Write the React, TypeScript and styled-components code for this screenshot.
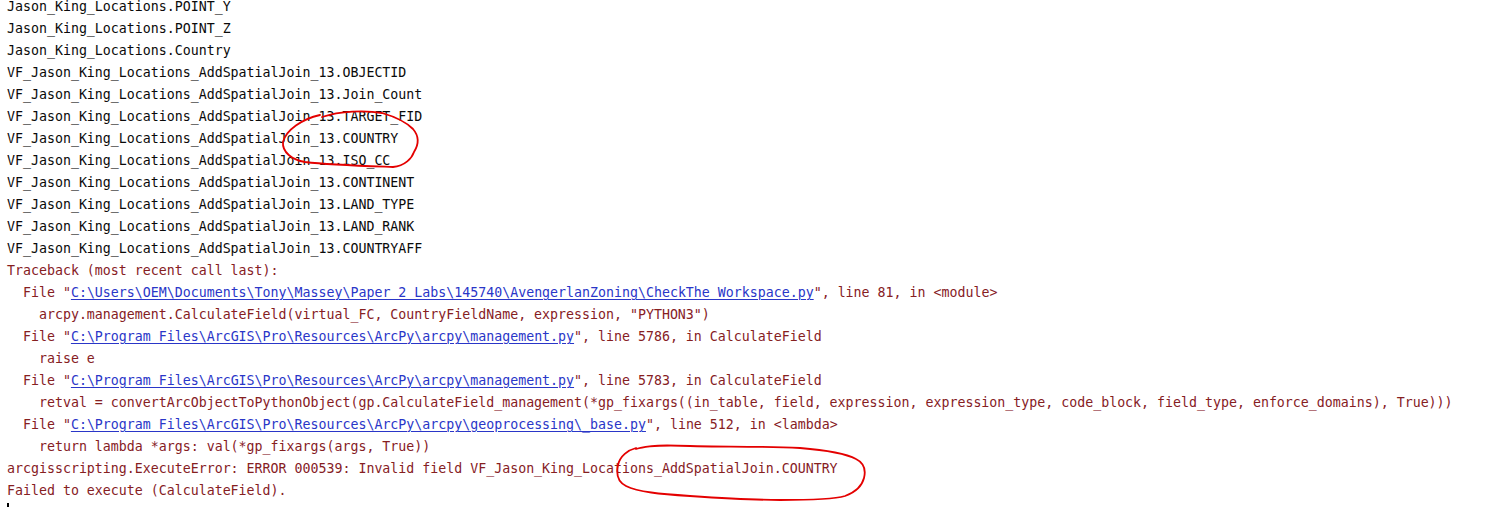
import React from "react";
import styled, { createGlobalStyle } from "styled-components";

const GlobalStyle = createGlobalStyle`
  html, body {
    margin: 0;
    padding: 0;
    background: #ffffff;
    overflow: hidden;
  }
  #root {
    width: 1495px;
    height: 507px;
  }
`;

const Page = styled.div`
  position: relative;
  width: 1495px;
  height: 507px;
  overflow: hidden;
  background: #ffffff;
`;

const Console = styled.div`
  display: flex;
  flex-direction: column;
  margin-top: -4px;
  padding-left: 7px;
  font-family: "DejaVu Sans Mono", "Liberation Mono", monospace;
  font-size: 13.28px;
  line-height: 22px;
  white-space: pre;
`;

const Line = styled.div<{ $err?: boolean }>`
  height: 22px;
  color: ${(p) => (p.$err ? "#86201f" : "#0a0a0a")};
`;

const Link = styled.span`
  color: #2a36c8;
  text-decoration: underline;
  text-decoration-thickness: 1px;
  text-underline-offset: 2px;
`;

const Caret = styled.span`
  display: inline-block;
  width: 2px;
  height: 16px;
  margin-top: 1px;
  background: #000000;
  vertical-align: top;
`;

const Annotations = styled.svg`
  position: absolute;
  left: 0;
  top: 0;
  pointer-events: none;
`;

const normalLines = [
  "Jason_King_Locations.POINT_Y",
  "Jason_King_Locations.POINT_Z",
  "Jason_King_Locations.Country",
  "VF_Jason_King_Locations_AddSpatialJoin_13.OBJECTID",
  "VF_Jason_King_Locations_AddSpatialJoin_13.Join_Count",
  "VF_Jason_King_Locations_AddSpatialJoin_13.TARGET_FID",
  "VF_Jason_King_Locations_AddSpatialJoin_13.COUNTRY",
  "VF_Jason_King_Locations_AddSpatialJoin_13.ISO_CC",
  "VF_Jason_King_Locations_AddSpatialJoin_13.CONTINENT",
  "VF_Jason_King_Locations_AddSpatialJoin_13.LAND_TYPE",
  "VF_Jason_King_Locations_AddSpatialJoin_13.LAND_RANK",
  "VF_Jason_King_Locations_AddSpatialJoin_13.COUNTRYAFF",
];

type ErrLine = { pre: string; link?: string; post?: string };

const errorLines: ErrLine[] = [
  { pre: "Traceback (most recent call last):" },
  {
    pre: '  File "',
    link: "C:\\Users\\OEM\\Documents\\Tony\\Massey\\Paper 2 Labs\\145740\\AvengerlanZoning\\CheckThe Workspace.py",
    post: '", line 81, in <module>',
  },
  { pre: '    arcpy.management.CalculateField(virtual_FC, CountryFieldName, expression, "PYTHON3")' },
  {
    pre: '  File "',
    link: "C:\\Program Files\\ArcGIS\\Pro\\Resources\\ArcPy\\arcpy\\management.py",
    post: '", line 5786, in CalculateField',
  },
  { pre: "    raise e" },
  {
    pre: '  File "',
    link: "C:\\Program Files\\ArcGIS\\Pro\\Resources\\ArcPy\\arcpy\\management.py",
    post: '", line 5783, in CalculateField',
  },
  {
    pre: "    retval = convertArcObjectToPythonObject(gp.CalculateField_management(*gp_fixargs((in_table, field, expression, expression_type, code_block, field_type, enforce_domains), True)))",
  },
  {
    pre: '  File "',
    link: "C:\\Program Files\\ArcGIS\\Pro\\Resources\\ArcPy\\arcpy\\geoprocessing\\_base.py",
    post: '", line 512, in <lambda>',
  },
  { pre: "    return lambda *args: val(*gp_fixargs(args, True))" },
  { pre: "arcgisscripting.ExecuteError: ERROR 000539: Invalid field VF_Jason_King_Locations_AddSpatialJoin.COUNTRY" },
  { pre: "Failed to execute (CalculateField)." },
];

export default function App() {
  return (
    <>
      <GlobalStyle />
      <Page>
        <Console>
          {normalLines.map((t, i) => (
            <Line key={"n" + i}>{t}</Line>
          ))}
          {errorLines.map((l, i) => (
            <Line key={"e" + i} $err>
              {l.pre}
              {l.link && <Link>{l.link}</Link>}
              {l.post}
            </Line>
          ))}
          <Line>
            <Caret />
          </Line>
        </Console>
        <Annotations width="1495" height="507" viewBox="0 0 1495 507">
          <path
            d="M 320 115 C 302 119, 286 130, 283 142 C 282 152, 292 160, 305 162 C 330 165, 365 166, 393 167 C 405 166, 412 158, 414 152 C 419 144, 419 136, 413 129 C 406 122, 396 117, 382 113 C 365 110, 340 111, 322 117"
            fill="none"
            stroke="#e40000"
            strokeWidth="1.8"
            strokeLinecap="round"
          />
          <path
            d="M 636 448 C 628 450, 620 456, 618 465 C 616 474, 618 482, 626 486 C 638 492, 660 494, 690 496 C 720 498, 750 500, 780 500 C 810 500, 835 499, 845 496 C 856 492, 862 486, 864 478 C 866 470, 864 463, 856 459 C 845 453, 825 450, 800 448 C 760 446, 720 447, 690 446 C 665 445, 648 445, 636 449"
            fill="none"
            stroke="#e40000"
            strokeWidth="1.8"
            strokeLinecap="round"
          />
        </Annotations>
      </Page>
    </>
  );
}
